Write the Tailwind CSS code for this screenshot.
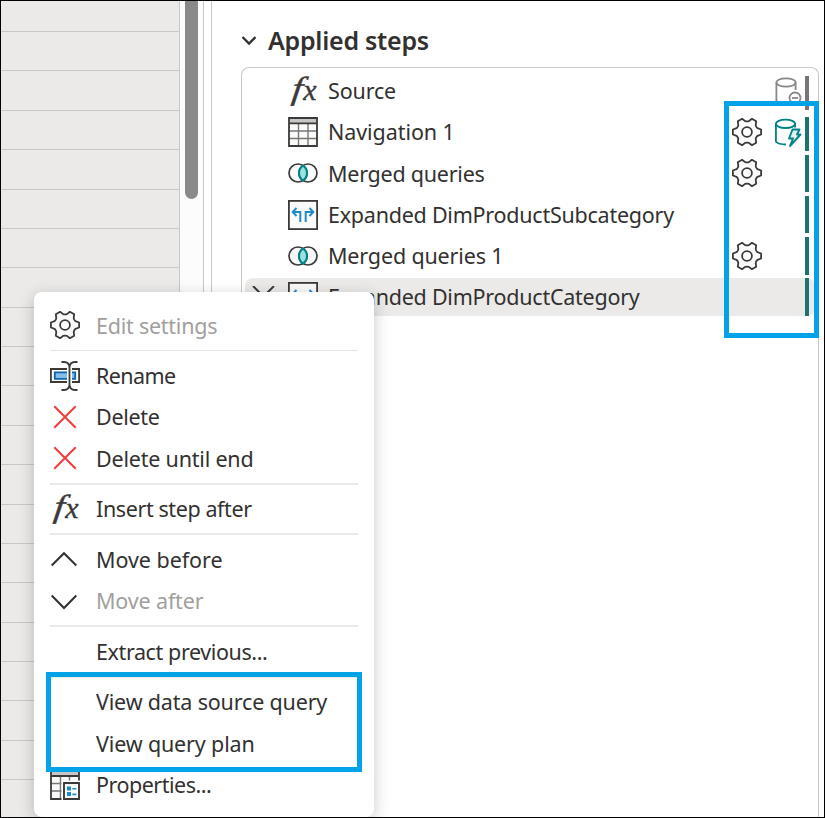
<!DOCTYPE html>
<html lang="en">
<head>
<meta charset="utf-8">
<title>Applied steps</title>
<script src="https://cdn.jsdelivr.net/npm/@tailwindcss/browser@4"></script>
</head>
<body class="bg-white">
<svg width="0" height="0" class="absolute">
  <symbol id="gear" viewBox="-15 -15 30 30">
    <path d="M14.1-2.5V2.5L10.5 3.8Q9 5 8.7 6.9L9.2 10.7 4.9 13.2 1.9 10.9Q0 10.2-1.9 10.9L-4.9 13.2-9.2 10.7-8.7 6.9Q-9 5-10.5 3.8L-14.1 2.5V-2.5L-10.5-3.8Q-9-5-8.7-6.9L-9.2-10.7-4.9-13.2-1.9-10.9Q0-10.2 1.9-10.9L4.9-13.2 9.2-10.7 8.7-6.9Q9-5 10.5-3.8Z" fill="#fafafa" stroke="#3b3a39" stroke-width="1.8" stroke-linejoin="round"/>
    <circle r="4.9" fill="#fff" stroke="#3b3a39" stroke-width="1.8"/>
  </symbol>
  <symbol id="merge" viewBox="0 0 30 20">
    <circle cx="10" cy="10" r="9" fill="#fafafa"/><circle cx="20" cy="10" r="9" fill="#fafafa"/>
    <circle cx="10" cy="10" r="9" fill="none" stroke="#3b3a39" stroke-width="1.7"/><circle cx="20" cy="10" r="9" fill="none" stroke="#3b3a39" stroke-width="1.7"/>
    <path d="M15 2.5A9 9 0 0 1 15 17.5A9 9 0 0 1 15 2.5Z" fill="#9ce0df" stroke="#038387" stroke-width="2.1"/>
  </symbol>
  <symbol id="expand" viewBox="0 0 30 30">
    <rect x=".9" y=".9" width="28.2" height="28.2" fill="#fafafa" stroke="#3b3a39" stroke-width="1.8"/>
    <path d="M12.3 22V12H5M8.5 8L4.7 12 8.5 16M17.7 22V12H25M21.5 8L25.3 12 21.5 16" fill="none" stroke="#1e8bcd" stroke-width="2"/>
  </symbol>
</svg>
<div class="relative flex h-[818px] w-[825px] overflow-hidden border border-black bg-white font-['Noto_Sans','Open_Sans',sans-serif] text-[21.5px] leading-none tracking-[-0.24px] text-[#323130]">
  <!-- grid rows -->
  <div class="w-[179px] shrink-0 border-r border-[#c8c8c8] bg-[#ebeae8]">
    <div class="h-[31.1px] border-b border-[#c8c8c8]"></div>
    <div class="grid auto-rows-[39.38px] *:border-b *:border-[#c8c8c8]">
      <i></i><i></i><i></i><i></i><i></i><i></i><i></i><i></i><i></i><i></i><i></i><i></i><i></i><i></i><i></i><i></i><i></i><i></i><i></i>
    </div>
  </div>
  <div class="w-6 shrink-0 border-r border-[#c8c8c8] bg-[#fcfcfc] pl-[5px]"><div class="h-[198px] w-[13px] rounded-b-full bg-[#8a8a8a]"></div></div>
  <div class="w-2 shrink-0 border-r border-[#c8c8c8]"></div>

  <!-- applied steps -->
  <section class="flex w-[607px] shrink-0 flex-col pl-[29px]">
    <h2 class="flex h-[66px] shrink-0 items-center pt-[13px] text-[25px] font-semibold tracking-[-0.25px]">
      <svg class="mr-[11px] size-[16px] shrink-0" viewBox="0 0 16 16"><path d="M1.5 4L8 10.5 14.5 4" fill="none" stroke="#323130" stroke-width="2.3"/></svg><span>Applied steps</span>
    </h2>
    <div class="flex w-[578px] grow flex-col gap-[3.2px] rounded-t-lg border border-b-0 border-[#c8c8c8] px-[3px] py-1">
      <div class="flex h-[38px] shrink-0 items-center pl-[43px]">
        <svg class="mr-[10px] h-8 w-[30px] overflow-visible" viewBox="0 0 30 32" font-family="'Liberation Serif',serif" font-style="italic" fill="#3b3a39" stroke="#3b3a39" stroke-width=".4"><text x="0" y="0" font-size="32" transform="translate(3 24) skewX(-7) scale(1.2 1)">f</text><text x="0" y="0" font-size="29" transform="translate(15.2 24.5) scale(1.03 1)">x</text></svg><span class="tracking-[-0.15px]">Source</span>
        <svg class="mr-[2px] ml-auto h-[30px] w-[28px] shrink-0" viewBox="0 0 28 30" fill="none" stroke="#8a8886" stroke-width="1.8"><ellipse cx="11" cy="6.5" rx="9.6" ry="4.2"/><path d="M1.4 6.5V25Q5 28.5 11 28.5M20.6 6.5V14"/><circle cx="20" cy="22" r="5.5"/><path d="M17 22h6"/></svg>
        <div class="mt-[4px] mr-[6px] h-[34px] w-1 bg-[#7a7574]"></div>
      </div>
      <div class="flex h-[38px] shrink-0 items-center pl-[43px]">
        <svg class="mr-[10px] size-[30px]" viewBox="0 0 30 30"><path d="M1 1h28v28H1z" fill="#fafafa"/><path d="M1 1h28v5H1z" fill="#c8c6c4"/><path d="M10.5 6v23M20 6v23M1 14h28M1 21.5h28" stroke="#797774" stroke-width="1.4"/><path d="M1 6.3h28M1 1h28v28H1z" fill="none" stroke="#3b3a39" stroke-width="1.8"/></svg><span class="tracking-[-0.07px]">Navigation 1</span>
        <svg class="mr-[13px] ml-auto size-[30px] shrink-0"><use href="#gear"/></svg>
        <svg class="mr-[3px] h-[30px] w-[27px] shrink-0" viewBox="0 0 27 30" fill="none" stroke="#038387" stroke-width="1.9"><ellipse cx="10.5" cy="6.8" rx="9.6" ry="4.2"/><path d="M.9 6.5V24.5Q3.5 27.5 11 27.5M20.1 6.5V10.5"/><path d="M17.5 12.5H24.5L22 17.5H25.5L15 29 18 21.5H14Z" fill="#dff3f2" stroke-linejoin="round"/></svg>
        <div class="mt-[4px] mr-[6px] h-[34px] w-1 bg-[#1a7476]"></div>
      </div>
      <div class="flex h-[38px] shrink-0 items-center pl-[43px]">
        <svg class="mr-[10px] h-5 w-[30px]"><use href="#merge"/></svg><span>Merged queries</span>
        <svg class="mr-[43px] ml-auto size-[30px] shrink-0"><use href="#gear"/></svg>
        <div class="mr-[6px] h-[37px] w-1 bg-[#1a7476]"></div>
      </div>
      <div class="flex h-[38px] shrink-0 items-center pl-[43px]">
        <svg class="mr-[10px] size-[30px]"><use href="#expand"/></svg><span>Expanded DimProductSubcategory</span>
        <div class="mr-[6px] ml-auto h-[37px] w-1 bg-[#1a7476]"></div>
      </div>
      <div class="flex h-[38px] shrink-0 items-center pl-[43px]">
        <svg class="mr-[10px] h-5 w-[30px]"><use href="#merge"/></svg><span class="tracking-[-0.15px]">Merged queries 1</span>
        <svg class="mr-[43px] ml-auto size-[30px] shrink-0"><use href="#gear"/></svg>
        <div class="mr-[6px] h-[38px] w-1 bg-[#1a7476]"></div>
      </div>
      <div class="flex h-[38px] shrink-0 items-center rounded-lg bg-[#ebeae9] pl-[7px]">
        <svg class="mr-[13px] h-[22px] w-[23px]" viewBox="0 0 23 22"><path d="M1 0L22 21M22 0L1 21" stroke="#3b3a39" stroke-width="2"/></svg>
        <svg class="mr-[10px] size-[30px]"><use href="#expand"/></svg><span>Expanded DimProductCategory</span>
        <div class="mr-[6px] ml-auto h-[38px] w-1 bg-[#1a7476]"></div>
      </div>
    </div>
  </section>

  <!-- context menu -->
  <div class="absolute top-[291px] left-[33px] flex h-[525px] w-[340px] flex-col rounded-lg bg-white px-4 pt-[12.6px] shadow-[0_4px_16px_rgba(0,0,0,0.22)] *:shrink-0">
    <div class="flex h-[41.25px] items-center gap-4 text-[#a19f9d]"><svg class="size-[30px]"><use href="#gear"/></svg><span class="pt-[1.5px]">Edit settings</span></div>
    <div class="h-[9.3px] pt-[4px]"><div class="h-px bg-[#e3e3e3]"></div></div>
    <div class="flex h-[41.25px] items-center gap-4"><svg class="size-[30px]" viewBox="0 0 30 30"><path d="M.9 8h28.2v13H.9z" fill="#fff" stroke="#3b3a39" stroke-width="1.8"/><path d="M4.8 11.3h20.4v6.6H4.8z" fill="#83beec" stroke="#0c64ae" stroke-width="1.8"/><path d="M17 4h5v22h-5z" fill="#fff"/><path d="M11.5 1H14Q19.5 1 19.5 7V23Q19.5 29 14 29H11.5M27.5 1H25Q19.5 1 19.5 7V23Q19.5 29 25 29H27.5" fill="none" stroke="#3b3a39" stroke-width="1.8"/></svg><span class="tracking-[-0.6px]">Rename</span></div>
    <div class="flex h-[41.25px] items-center gap-4"><svg class="size-[30px]" viewBox="0 0 30 30"><path d="M4.3 4.3L25.7 25.7M25.7 4.3L4.3 25.7" stroke="#ee3d3b" stroke-width="2"/></svg><span class="tracking-[-0.3px]">Delete</span></div>
    <div class="flex h-[41.25px] items-center gap-4"><svg class="size-[30px]" viewBox="0 0 30 30"><path d="M4.3 4.3L25.7 25.7M25.7 4.3L4.3 25.7" stroke="#ee3d3b" stroke-width="2"/></svg><span class="tracking-[-0.2px]">Delete until end</span></div>
    <div class="h-[9.3px] pt-[4px]"><div class="h-0.5 bg-[#e9e9e9]"></div></div>
    <div class="flex h-[41.25px] items-center gap-4"><svg class="h-8 w-[30px] overflow-visible" viewBox="0 0 30 32" font-family="'Liberation Serif',serif" font-style="italic" fill="#3b3a39" stroke="#3b3a39" stroke-width=".4"><text x="0" y="0" font-size="32" transform="translate(3 24) skewX(-7) scale(1.2 1)">f</text><text x="0" y="0" font-size="29" transform="translate(15.2 24.5) scale(1.03 1)">x</text></svg><span class="tracking-[-0.4px]">Insert step after</span></div>
    <div class="h-[9.3px] pt-[4px]"><div class="h-0.5 bg-[#e9e9e9]"></div></div>
    <div class="flex h-[41.25px] items-center gap-4"><svg class="size-[30px]" viewBox="0 0 30 30"><path d="M1.7 21.5L14 9.2 26.3 21.5" fill="none" stroke="#323130" stroke-width="2"/></svg><span class="tracking-[-0.05px]">Move before</span></div>
    <div class="flex h-[41.25px] items-center gap-4 text-[#a19f9d]"><svg class="size-[30px]" viewBox="0 0 30 30"><path d="M1.7 9.5L14 22 26.3 9.5" fill="none" stroke="#323130" stroke-width="2"/></svg><span class="tracking-[-0.15px]">Move after</span></div>
    <div class="h-[9.3px] pt-[4px]"><div class="h-0.5 bg-[#e9e9e9]"></div></div>
    <div class="flex h-[41.6px] items-center pl-[46px]"><span class="tracking-[-0.4px]">Extract previous...</span></div>
    <div class="h-[9.3px] pt-[4px]"><div class="h-0.5 bg-[#e9e9e9]"></div></div>
    <div class="flex h-[41.25px] items-center pl-[46px]"><span class="tracking-[-0.17px]">View data source query</span></div>
    <div class="flex h-[41.5px] items-center pl-[46px]"><span class="tracking-[-0.15px]">View query plan</span></div>
    <div class="flex h-[41.25px] items-center gap-4"><svg class="size-[30px]" viewBox="0 0 30 30"><path d="M1 1h28v28H1z" fill="#fafafa"/><path d="M1 1h28v5H1z" fill="#c8c6c4"/><path d="M10.5 6v23M19.5 6v6M1 13.5h12M1 21h12" stroke="#797774" stroke-width="1.5"/><path d="M1 6h28M1 1h28v28H1z" fill="none" stroke="#3b3a39" stroke-width="1.8"/><path d="M11.5 10.5H30V30H11.5z" fill="#fff"/><path d="M14 13h15v16H14z" fill="#fafafa" stroke="#3b3a39" stroke-width="1.9"/><path d="M17 16.5h4v4h-4zM17 22h4v4h-4zM22.3 18h4v1.6h-4zM22.3 23.6h4v1.6h-4z" fill="#1e8bcd"/></svg><span class="tracking-[-0.5px]">Properties...</span></div>
  </div>

  <!-- highlight frames -->
  <div class="absolute top-[100px] left-[723px] h-[237px] w-[95px] border-[5px] border-[#00a2e8]"></div>
  <div class="absolute top-[671px] left-[45px] h-[100px] w-[316px] border-[5px] border-[#00a2e8]"></div>
</div>
</body>
</html>
